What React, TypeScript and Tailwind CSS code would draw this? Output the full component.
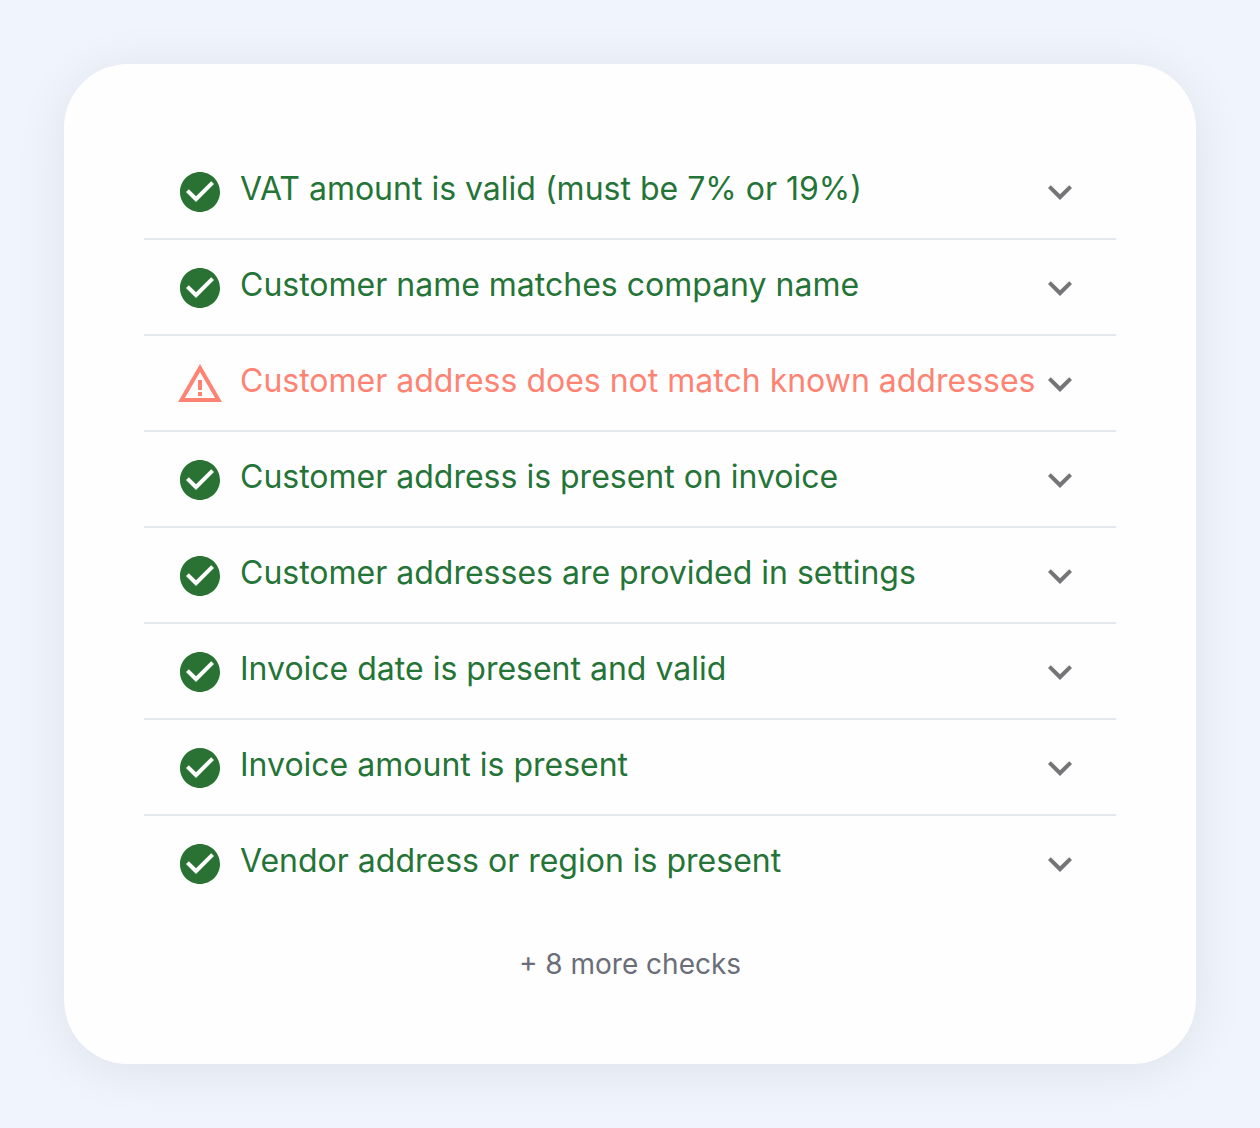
import { useState } from 'react';
import { clsx } from 'clsx';

type Check = {
  label: string;
  status: 'ok' | 'warning';
};

const checks: Check[] = [
  { label: 'VAT amount is valid (must be 7% or 19%)', status: 'ok' },
  { label: 'Customer name matches company name', status: 'ok' },
  { label: 'Customer address does not match known addresses', status: 'warning' },
  { label: 'Customer address is present on invoice', status: 'ok' },
  { label: 'Customer addresses are provided in settings', status: 'ok' },
  { label: 'Invoice date is present and valid', status: 'ok' },
  { label: 'Invoice amount is present', status: 'ok' },
  { label: 'Vendor address or region is present', status: 'ok' },
];

const paths = {
  ok: 'M12 2C6.48 2 2 6.48 2 12s4.48 10 10 10 10-4.48 10-10S17.52 2 12 2zm-2 15-5-5 1.41-1.41L10 14.17l7.59-7.59L19 8l-9 9z',
  warning: 'M12 5.99 19.53 19H4.47L12 5.99M12 2 1 21h22L12 2zm1 14h-2v2h2v-2zm0-6h-2v5h2v-5z',
  expand: 'M16.59 8.59 12 13.17 7.41 8.59 6 10l6 6 6-6z',
};

function Icon({ name, className }: { name: keyof typeof paths; className?: string }) {
  return (
    <svg viewBox="0 0 24 24" fill="currentColor" aria-hidden="true" className={clsx('size-12 shrink-0', className)}>
      <path d={paths[name]} />
    </svg>
  );
}

function CheckRow({ check }: { check: Check }) {
  const [open, setOpen] = useState(false);

  return (
    <li className="border-b-2 border-[#e4e8ef] last:border-transparent">
      <button
        type="button"
        aria-expanded={open}
        onClick={() => setOpen(!open)}
        className={clsx(
          'flex w-full cursor-pointer items-center px-8 pt-6 pb-[22px] text-left',
          check.status === 'ok' ? 'text-[#257437]' : 'text-[#ff8373]'
        )}
      >
        <Icon name={check.status} className={check.status === 'ok' ? 'text-[#297233]' : undefined} />
        <span className="flex-1 pb-1.5 pl-4 text-[32px] leading-10">{check.label}</span>
        <Icon name="expand" className={clsx('text-[#757577]', open && 'rotate-180')} />
      </button>
    </li>
  );
}

export default function App() {
  return (
    <main className="min-h-screen bg-[#f0f4fd] p-16 font-['Inter',sans-serif]">
      <section className="rounded-[64px] bg-[#fefefe] p-20 shadow-[0_6px_52px_rgba(0,0,0,0.08)]">
        <ul>
          {checks.map((check) => (
            <CheckRow key={check.label} check={check} />
          ))}
        </ul>
        <p className="pt-8 text-center text-[28px] leading-10 text-[#6b6e78]">+ 8 more checks</p>
      </section>
    </main>
  );
}
